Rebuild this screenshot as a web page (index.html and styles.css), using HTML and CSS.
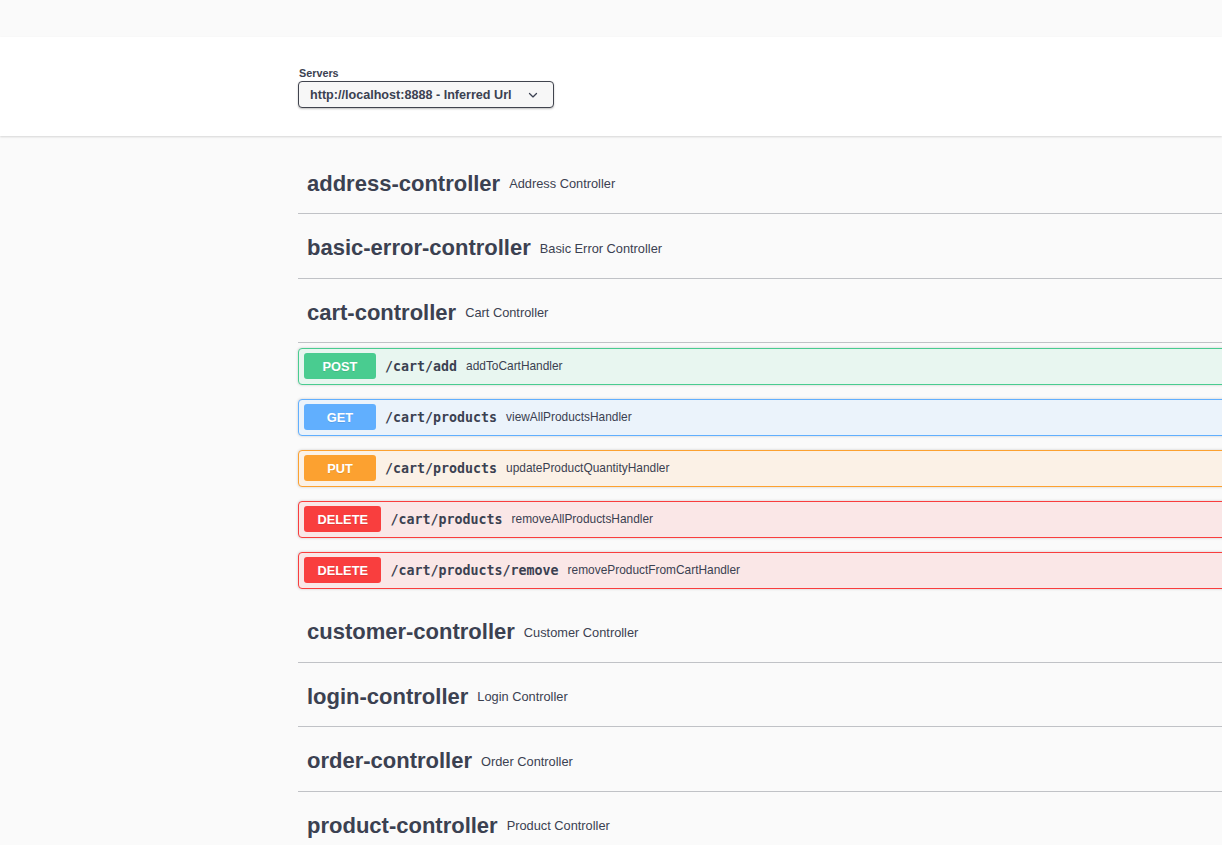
FILE: index.html
```html
<!DOCTYPE html>
<html lang="en">
<head>
<meta charset="utf-8">
<title>Swagger UI</title>
<link rel="stylesheet" href="styles.css">
</head>
<body>
<div class="topband"></div>
<section class="scheme">
  <div class="scheme-inner">
    <div class="servers-label">Servers</div>
    <div class="select">
      <span class="select-text">http://localhost:8888 - Inferred Url</span>
      <svg class="chev" width="18" height="18" viewBox="0 0 20 20"><path d="M13.418 7.859a.695.695 0 01.978 0 .68.68 0 010 .969l-3.908 3.83a.697.697 0 01-.979 0l-3.908-3.830a.68.68 0 010-.969.695.695 0 01.978 0L10 11l3.418-3.141z" fill="#3b4151"/></svg>
    </div>
  </div>
</section>
<main class="wrapper">
  <div class="tag"><h3 class="tag-name">address-controller</h3><small class="tag-desc">Address Controller</small></div>
  <div class="tag"><h3 class="tag-name">basic-error-controller</h3><small class="tag-desc">Basic Error Controller</small></div>
  <div class="tag"><h3 class="tag-name">cart-controller</h3><small class="tag-desc">Cart Controller</small></div>
  <div class="ops">
    <div class="op op-post"><span class="method">POST</span><span class="path">/cart/add</span><span class="desc">addToCartHandler</span></div>
    <div class="op op-get"><span class="method">GET</span><span class="path">/cart/products</span><span class="desc">viewAllProductsHandler</span></div>
    <div class="op op-put"><span class="method">PUT</span><span class="path">/cart/products</span><span class="desc">updateProductQuantityHandler</span></div>
    <div class="op op-delete"><span class="method">DELETE</span><span class="path">/cart/products</span><span class="desc">removeAllProductsHandler</span></div>
    <div class="op op-delete"><span class="method">DELETE</span><span class="path">/cart/products/remove</span><span class="desc">removeProductFromCartHandler</span></div>
  </div>
  <div class="tag"><h3 class="tag-name">customer-controller</h3><small class="tag-desc">Customer Controller</small></div>
  <div class="tag"><h3 class="tag-name">login-controller</h3><small class="tag-desc">Login Controller</small></div>
  <div class="tag"><h3 class="tag-name">order-controller</h3><small class="tag-desc">Order Controller</small></div>
  <div class="tag"><h3 class="tag-name">product-controller</h3><small class="tag-desc">Product Controller</small></div>
</main>
</body>
</html>
```
FILE: styles.css
```css
html, body {
  margin: 0;
  padding: 0;
}
body {
  background: #fafafa;
  font-family: "Liberation Sans", Arial, sans-serif;
  color: #3b4151;
  overflow: hidden;
  height: 845px;
}
.topband {
  height: 37px;
}
.scheme {
  background: #fff;
  box-shadow: 0 1px 2px 0 rgba(0, 0, 0, 0.15);
  height: 99px;
  box-sizing: border-box;
  padding-top: 30px;
}
.scheme-inner {
  margin-left: 298px;
  display: flex;
  flex-direction: column;
  align-items: flex-start;
}
.servers-label {
  font-size: 10.8px;
  font-weight: 700;
  line-height: 13px;
  padding-left: 1px;
  color: #3b4151;
}
.select {
  margin-top: 1px;
  width: 256px;
  height: 27px;
  box-sizing: border-box;
  border: 1px solid #41444e;
  border-radius: 4px;
  background: #f7f7f7;
  box-shadow: 0 1px 2px 0 rgba(0, 0, 0, 0.25);
  display: flex;
  align-items: center;
  padding-left: 11px;
  padding-right: 11px;
}
.select-text {
  flex: 1;
  font-size: 12.6px;
  font-weight: 700;
  color: #3b4151;
  white-space: nowrap;
}
.chev {
  display: block;
  flex: none;
}
.wrapper {
  margin-left: 298px;
  margin-top: 18px;
  width: 1140px;
}
.tag {
  height: 59px;
  display: flex;
  align-items: center;
  padding: 0 18px 0 9px;
  border-bottom: 1px solid rgba(59, 65, 81, 0.3);
  margin-bottom: 4.5px;
}
.tag-name {
  margin: 0;
  font-size: 22px;
  font-weight: 700;
  color: #3b4151;
  white-space: nowrap;
}
.tag-desc {
  font-size: 12.8px;
  font-weight: 400;
  padding: 0 9px;
  color: #3b4151;
}
.ops {
  display: flex;
  flex-direction: column;
}
.op {
  height: 37px;
  box-sizing: border-box;
  border: 1px solid;
  border-radius: 4px;
  box-shadow: 0 0 3px rgba(0, 0, 0, 0.19);
  margin-bottom: 14px;
  display: flex;
  align-items: center;
  padding: 0 5px;
}
.method {
  min-width: 72px;
  height: 26px;
  box-sizing: border-box;
  padding: 0 13.5px;
  border-radius: 3px;
  color: #fff;
  font-size: 12.8px;
  font-weight: 700;
  text-shadow: 0 1px 0 rgba(0, 0, 0, 0.1);
  display: flex;
  align-items: center;
  justify-content: center;
}
.path {
  font-family: "DejaVu Sans Mono", "Liberation Mono", monospace;
  font-size: 13.3px;
  font-weight: 700;
  color: #3b4151;
  padding: 0 9px;
  white-space: nowrap;
}
.desc {
  font-size: 11.9px;
  color: #3b4151;
  padding-bottom: 1px;
}
.op-post { border-color: #49cc90; background: #e8f6f0; }
.op-post .method { background: #49cc90; }
.op-get { border-color: #61affe; background: #ebf3fb; }
.op-get .method { background: #61affe; }
.op-put { border-color: #fca130; background: #fbf1e6; }
.op-put .method { background: #fca130; }
.op-delete { border-color: #f93e3e; background: #fae7e7; }
.op-delete .method { background: #f93e3e; }
```
